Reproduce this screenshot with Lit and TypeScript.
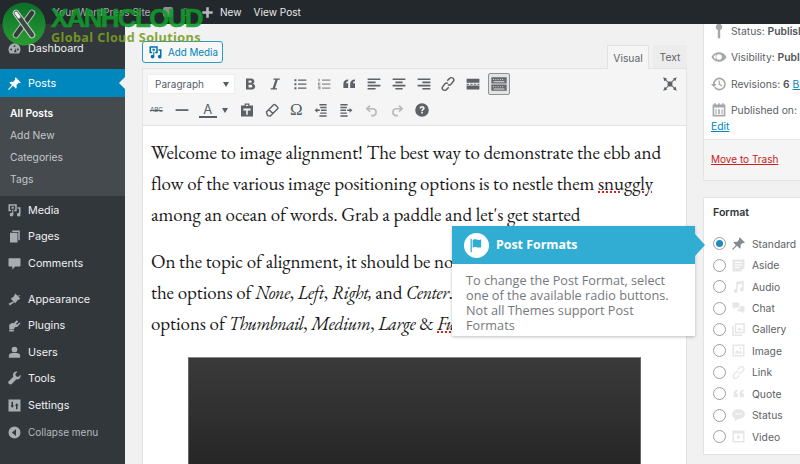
import { LitElement, html, css, svg } from "lit";
import { customElement } from "lit/decorators.js";

const I: Record<string, any> = {
  media: svg`<path fill-rule="evenodd" d="M2 1.500h11V11h-3.500V9H11V3.500H4V9h1.500v2H2zM6 5h3v2.500H6z"/><circle cx="6" cy="15.500" r="2.400"/><path d="M7 9h1.400v6.500H7z"/><path d="M14 5.500h4v10a2.400 2.400 0 1 1-2-2.300V7.500h-2z"/>`,
  gauge: svg`<path fill-rule="evenodd" d="M10 3a8 8 0 0 0-8 8c0 2 .8 4 2 5.500h12c1.200-1.500 2-3.500 2-5.500a8 8 0 0 0-8-8zM5.500 10a1.300 1.300 0 1 1 0 2.600 1.300 1.300 0 0 1 0-2.600zM10 5.500a1.300 1.300 0 1 1 0 2.600 1.300 1.300 0 0 1 0-2.600zM14.500 10a1.300 1.300 0 1 1 0 2.600 1.300 1.300 0 0 1 0-2.600zM9 15l3-5.500.5 5.500z"/>`,
  pin: svg`<path d="M11.500 1.500l7 7-1.500 1-1-.5-3.500 3c.8 2 .5 3.500-.5 5L8 13l-5.500 5.500-1-.7L6.500 12 3 8.500c1.500-1 3-1.300 5-.5l3-3.500-.5-1z"/>`,
  pages: svg`<path d="M7 2h10v13h-2V4H7z"/><path d="M4 5h10v13H4z"/>`,
  comment: svg`<path d="M3 3h14a1 1 0 0 1 1 1v9a1 1 0 0 1-1 1h-6l-4 4v-4H3a1 1 0 0 1-1-1V4a1 1 0 0 1 1-1z"/>`,
  brush: svg`<path d="M19 4l-5 1-3-3-2 4-4 3 6 6 3-4 4-2-3-3zM8 12.500l-6 3 2 2.500 5.500-4.500z"/>`,
  plug: svg`<path d="M13 3l2 1.500-3 3 1.500 1.500 3-3L18 7l-3.500 4c-1 1-2.500 1.300-3.500 1L9 15H3V9l3-2c.5-.3 2-.3 3 0z"/><path d="M3 15.500h6V18H3z"/>`,
  user: svg`<circle cx="10" cy="6" r="3.800"/><path d="M2.500 17v-3c0-2 2-3.500 4.500-3.500h6c2.500 0 4.500 1.500 4.500 3.500v3z"/>`,
  wrench: svg`<path d="M18 5l-3 3-3-1-1-3 3-3c-3-1-6 1-6 4.500 0 .8.200 1.500.4 2L2 14c-1.500 2 2 5 4 3.500l6.500-6.500c3.500 1 6.500-2 5.500-6z"/>`,
  settings: svg`<path fill-rule="evenodd" d="M2 2h16v16H2zM6 5v5H4.500L7 13l2.500-3H8V5zm6 10v-5h-1.500L13 7l2.500 3H14v5z"/>`,
  collapse: svg`<path fill-rule="evenodd" d="M10 2a8 8 0 1 1 0 16 8 8 0 0 1 0-16zm2 3.500L6.500 10l5.500 4.500z"/>`,
  plus: svg`<path d="M8 2h4v6h6v4h-6v6H8v-6H2V8h6z"/>`,
};
const ic = (n: string, cls = "ic") => html`<svg class=${cls} viewBox="0 0 20 20">${I[n]}</svg>`;

const nav = [
  ["media", "Media"], ["pages", "Pages"], ["comment", "Comments"],
];
const nav2 = [
  ["brush", "Appearance"], ["plug", "Plugins"], ["user", "Users"], ["wrench", "Tools"], ["settings", "Settings"],
];

const t: Record<string, any> = {
  b: svg`<path fill-rule="evenodd" d="M5 3h6.500c4.500 0 5.200 5.500 2 6.600 4.300.8 3.800 7.400-1 7.400H5zm3.200 2.500v3h2.500c2 0 2-3 0-3zm0 5.500v3.500h3c2.300 0 2.300-3.500 0-3.500z"/>`,
  i: svg`<path d="M8 3h8v1.800h-2.500L10 15.200h2.500V17h-8v-1.800H7L10.500 4.800H8z"/>`,
  ul: svg`<path d="M3 4h2.500v2.500H3zm0 5h2.500v2.500H3zm0 5h2.500v2.500H3zM7.500 4.500H18V6H7.500zm0 5H18V11H7.500zm0 5H18V16H7.500z"/>`,
  ol: svg`<path opacity=".7" d="M3 3.500h1.500v3.500H3zm-.5 5h3v1.200H4V11h1.500v1H2.500zm0 4.500h3v3.500h-3V15.500h1.800v-.8H2.500zM7.500 4.500H18V6H7.500zm0 5H18V11H7.500zm0 5H18V16H7.500z"/>`,
  q: svg`<path d="M9 4.500v2c-2 .3-2.500 1.500-2.500 2.500H9v6H3v-5c0-3.500 2-5.500 6-5.500zm8.500 0v2c-2 .3-2.500 1.500-2.500 2.500h2.500v6h-6v-5c0-3.500 2-5.500 6-5.500z"/>`,
  al: svg`<path d="M2 3h16v2H2zm0 4h10v2H2zm0 4h16v2H2zm0 4h10v2H2z"/>`,
  ac: svg`<path d="M2 3h16v2H2zm3.500 4h9v2h-9zM2 11h16v2H2zm3.500 4h9v2h-9z"/>`,
  ar: svg`<path d="M2 3h16v2H2zm6 4h10v2H8zM2 11h16v2H2zm6 4h10v2H8z"/>`,
  link: svg`<path fill="none" stroke="currentColor" stroke-width="1.800" d="M9 6l3-3c1.500-1.300 3.500-1.300 4.500 0s1 3 0 4l-3 3.500c-1 1-2.500 1-3.500 0M11 14l-3 3c-1.500 1.300-3.500 1.300-4.500 0s-1-3 0-4l3-3.500c1-1 2.500-1 3.500 0"/>`,
  more: svg`<path d="M2 3.500h16v5H2zM2 9.800h3v1H2zm4.500 0h3v1h-3zm4.500 0h3v1h-3zm4.500 0H18v1h-2.500zM2 12h16v5H2z"/>`,
  full: svg`<path d="M7 7h6v6H7zM1.500 1.500l5 2-1.300 1.200 2.300 2.300-.8.800-2.300-2.300L3 6.500zM18.500 1.500l-2 5-1.200-1.300-2.300 2.300-.8-.8 2.300-2.300L13.500 3.500zM1.500 18.500l2-5 1.200 1.300 2.300-2.300.8.800-2.300 2.300 1.300 1.200zM18.500 18.500l-5-2 1.300-1.200-2.300-2.300.8-.8 2.300 2.300 1.200-1.300z"/>`,
  hr: svg`<path d="M2 9h16v2.200H2z"/>`,
  paste: svg`<path fill-rule="evenodd" d="M7 2h6v2.500h4.500V18h-15V4.500H7zm1.500 1.500V5h3V3.500zM5.500 8v2.500H9V16h2v-5.500h3.500V8z"/>`,
  eraser: svg`<path fill="none" stroke="currentColor" stroke-width="1.800" d="M3 12.500L12 3.500c.6-.6 1.500-.6 2 0l3 3c.6.500.6 1.400 0 2L8 17.500l-3.500-.5zM6 9.500l5 5"/>`,
  indl: svg`<path d="M8 2.500h9v1.800H8zM9 6h8v1.800H9zM10 9.500h7v1.800h-7zM9 13h8v1.800H9zM8 16.500h9v1.800H8zM2 10.400l3.500-3v2H8.500v2H5.500v2z"/>`,
  indr: svg`<path d="M3 2.500h9v1.800H3zM3 6h8v1.800H3zM3 9.500h7v1.800H3zM3 13h8v1.800H3zM3 16.500h9v1.800H3zM18 10.400l-3.500-3v2H11.500v2h3v2z"/>`,
  undo: svg`<path fill="none" stroke="currentColor" stroke-width="2" d="M7.500 4.500L3.500 8.500l4 3.500M4 8.500h7.500a4.300 4.300 0 0 1 0 8.500H9"/>`,
  redo: svg`<path fill="none" stroke="currentColor" stroke-width="2" d="M12.500 4.500l4 4-4 3.500M16 8.500H8.500a4.300 4.300 0 0 0 0 8.500H11"/>`,
  help: svg`<path fill-rule="evenodd" d="M10 1.500a8.500 8.500 0 1 1 0 17 8.500 8.500 0 0 1 0-17zM7 8h2c0-1.500 2-1.500 2 0 0 1-2 1.500-2 3.500h2c0-1.500 2.300-2 2.300-3.800 0-3.200-6.300-3.700-6.300.3zm2 4.500v2h2v-2z"/>`,
  kb: svg`<path fill-rule="evenodd" d="M1.500 2.500h17v7h-17zm2 2v1h1v-1zm2.500 0v1h1v-1zm2.500 0v1h1v-1zm2.500 0v1h1v-1zm2.500 0v1h1v-1zM4 7v1h12V7zM1.500 10.500h17v7h-17zm2 2v1h1v-1zm2.500 0v1h1v-1zm2.500 0v1h1v-1zm2.500 0v1h1v-1zm2.500 0v1h1v-1zM4 15v1h12v-1z"/>`,
};
const tb = (n: string, cls = "tb") => html`<svg class=${cls} viewBox="0 0 20 20">${t[n]}</svg>`;

const fm: Record<string, any> = {
  Standard: svg`<path d="M11.500 1.500l7 7-1.500 1-1-.5-3.500 3c.8 2 .5 3.500-.5 5L8 13l-5.500 5.500-1-.7L6.500 12 3 8.500c1.500-1 3-1.300 5-.5l3-3.500-.5-1z"/>`,
  Aside: svg`<path fill-rule="evenodd" d="M2 2h16v11l-5 5H2zm3 3v1.500h10V5zm0 3.500V10h10V8.500zM5 12v1.500h6V12z"/>`,
  Audio: svg`<path d="M7 4l10-2v11.500a2.700 2.700 0 1 1-2-2.500V6L9 7.300V16a2.700 2.700 0 1 1-2-2.500z"/>`,
  Chat: svg`<path d="M2 2h9v7H6l-2 2V9H2zM9 10.500h3V7h6v7h-1.500v3L13 14H9z"/>`,
  Gallery: svg`<path fill-rule="evenodd" d="M5 1.500h13.500V15H5zm2 2V13h9.500V3.500zM8 11l3-4 2 2.500 1-1 2 2.500zM1.500 5H3.500v11.500H15v2H1.500z"/>`,
  Image: svg`<path fill-rule="evenodd" d="M2 2h16v16H2zm2 2v12h12V4zm1 10l3-5 2.500 3 2-2 2.500 4zM12.500 5.500a1.500 1.500 0 1 1 0 3 1.500 1.500 0 0 1 0-3z"/>`,
  Link: svg`<path fill="none" stroke="currentColor" stroke-width="1.800" d="M9 6l3-3c1.500-1.300 3.500-1.300 4.500 0s1 3 0 4l-3 3.500c-1 1-2.500 1-3.500 0M11 14l-3 3c-1.500 1.300-3.500 1.300-4.500 0s-1-3 0-4l3-3.500c1-1 2.500-1 3.500 0"/>`,
  Quote: svg`<path d="M9 5v2c-2 .3-2.500 1.500-2.500 2.500H9V15H3.500V10C3.500 7 5.500 5 9 5zm8 0v2c-2 .3-2.500 1.500-2.500 2.500H17V15h-5.500V10c0-3 2-5 5.500-5z"/>`,
  Status: svg`<path fill-rule="evenodd" d="M10 1.500c4.500 0 8.500 2.700 8.500 6.500s-4 6.500-8.500 6.500h-1L5 18v-4C3 13 1.500 10.500 1.500 8c0-3.800 4-6.500 8.500-6.500zM6 7v2h2V7zm3 0v2h2V7zm3 0v2h2V7z"/>`,
  Video: svg`<path fill-rule="evenodd" d="M2 2h16v16H2zm2 4v10h12V6zM8 8l5 3-5 3z"/>`,
};

@customElement("app-root")
export class AppRoot extends LitElement {
  static styles = css`
    :host { display: block; width: 800px; height: 464px; overflow: hidden; position: relative; background: #f1f1f1; font-family: Inter, "Liberation Sans", sans-serif; }
    .bar { height: 24px; background: #23282d; color: #e8eaeb; display: flex; align-items: center; font-size: 10.100px; padding-left: 53px; }
    .bar .site { width: 110px; flex: none; color: #aeb2b5; white-space: nowrap; }
    .bar .bub { width: 10px; height: 10px; background: #8c9094; border-radius: 2px; flex: none; }
    .bar .zero { width: 28px; flex: none; padding-left: 9px; box-sizing: border-box; color: #6a6f74; }
    .bar .plus { width: 13px; height: 13px; fill: #b4b9be; margin: 0 6px 0 0; flex: none; }
    .bar .new { margin-right: 12px; }
    .main { display: flex; height: 440px; }

    .side { width: 125px; flex: none; background: #32373c; color: #eef0f1; font-size: 10.800px; padding-top: 11px; box-sizing: border-box; }
    .ic { width: 15px; height: 15px; fill: #a8adb2; flex: none; }
    .it { height: 26.600px; display: flex; align-items: center; gap: 6px; padding-left: 7px; white-space: nowrap; }
    .it.dash { height: 26px; }
    .it.cur { background: #0087be; color: #fff; height: 28px; margin-top: 8px; position: relative; }
    .it.cur .ic { fill: #fff; }
    .it.cur::after { content: ""; position: absolute; right: 0; top: 8px; border: 6px solid transparent; border-right-color: #f1f1f1; border-left: 0; }
    .sub { background: #454a4f; padding: 5px 0 6px 10px; margin-bottom: 1px; color: #c4c7ca; font-size: 10.300px; }
    .sub div { height: 22px; display: flex; align-items: center; }
    .sub .on { color: #fff; font-weight: 600; }
    .sep { height: 9px; }
    .coll { color: #b4b9be; font-size: 10px; }

    .content { width: 562px; flex: none; padding: 17px 0 0 17px; box-sizing: border-box; }
    .head { display: flex; justify-content: space-between; height: 27px; }
    .add { width: 81px; height: 22px; box-sizing: border-box; border: 1px solid #2a9cc4; border-radius: 3px; background: #f7f7f7; color: #0085ba; font-size: 9.800px; display: flex; align-items: center; gap: 5px; padding-left: 5px; white-space: nowrap; }
    .add svg { width: 15px; height: 15px; fill: #0073aa; flex: none; }
    .tabs { display: flex; align-self: flex-end; gap: 4px; position: relative; margin-bottom: -1px; }
    .tab { height: 23px; width: 34px; font-size: 10.300px; color: #5f6468; display: flex; align-items: center; justify-content: center; background: #ececec; box-sizing: border-box; }
    .tab.on { width: 42px; height: 24px; background: #f5f5f5; border: 1px solid #e2e2e2; border-bottom: 0; }
    .editor { border: 1px solid #e2e2e2; background: #fff; height: 420px; }
    .tools { background: #f5f5f5; border-bottom: 1px solid #e2e2e2; padding: 2px 8px 0 4px; box-sizing: border-box; height: 57px; }
    .row { height: 26px; display: flex; align-items: center; color: #555d66; }
    .row svg { flex: none; }
    .tb { width: 16px; height: 16px; fill: #5c6268; color: #5c6268; margin-right: 8.800px; }
    .tb.last { margin-right: 0; }
    .tb.dim { opacity: .4; }
    .tb.wide { margin-right: 9.300px; }
    .sel { width: 88px; height: 20px; background: #fff; border: 1px solid #eeeeee; box-sizing: border-box; font-size: 10px; color: #555d66; display: flex; align-items: center; justify-content: space-between; padding: 0 5px 0 7px; margin-right: 7px; flex: none; }
    .car { width: 0; height: 0; border: 3.500px solid transparent; border-top: 5px solid #555d66; border-bottom: 0; flex: none; }
    .car.col-car { margin: 0 10.500px 0 5.500px; }
    .kb { width: 22px; height: 22px; border: 1px solid #8d9296; border-radius: 2px; background: #e3e3e3; display: flex; align-items: center; justify-content: center; box-sizing: border-box; margin-left: -2px; flex: none; }
    .kb svg { width: 18px; height: 18px; fill: #65696d; }
    .spacer { flex: 1; }
    .abc { font-size: 6.500px; letter-spacing: -.3px; width: 13px; margin: 0 11px 0 3px; text-decoration: line-through; white-space: nowrap; flex: none; }
    .col { font-size: 13px; width: 18px; border-bottom: 2px solid #555d66; text-align: center; line-height: 13px; flex: none; }
    .om { font-size: 17px; width: 16px; margin-right: 8.800px; text-align: center; font-family: "Liberation Serif", serif; flex: none; }
    .body { padding: 0 0 0 8px; font-family: "EB Garamond", "Liberation Serif", serif; font-size: 19px; line-height: 30.900px; color: #1a1a1a; letter-spacing: -.08px; }
    .body p { margin: 0 0 16px; white-space: nowrap; }
    .body p.first { padding-top: 12px; }
    .body i { font-size: 18px; letter-spacing: -.45px; }
    .body .w { text-decoration: underline dotted #e02020; text-underline-offset: 2px; }
    .pic { width: 453px; height: 130px; margin: 18px 0 0 37px; box-sizing: border-box; background: linear-gradient(#3a3a3a, #222); border: 1px solid #666; border-top-color: #8a8a8a; border-bottom: 0; }

    .right { flex: 1; padding: 0 0 0 16px; min-width: 0; font-size: 10.300px; color: #5b6065; }
    .box { background: #fff; border: 1px solid #e3e3e3; border-top: 0; border-right: 0; box-sizing: border-box; }
    .pub { height: 157px; overflow: hidden; }
    .line { height: 26.500px; display: flex; align-items: center; gap: 4px; padding-left: 7px; white-space: nowrap; }
    .line.top { height: 14px; margin-bottom: 6px; }
    .line svg { width: 16px; height: 16px; fill: #a4a8ac; color: #a4a8ac; flex: none; }
    .line b { color: #50555a; font-weight: 600; }
    .line a, .edit { color: #0085ba; text-decoration: underline; }
    .edit { padding-left: 7px; margin-top: -4px; height: 14px; display: block; line-height: 13px; }
    .trash { border-top: 1px solid #e8e8e8; background: #f5f5f5; margin-top: 5px; height: 42px; padding: 13px 0 0 7px; box-sizing: border-box; color: #cf2020; text-decoration: underline; font-size: 10px; }
    .fmt { margin-top: 16px; height: 258px; border-top: 1px solid #e3e3e3; }
    .fmt h3 { margin: 0; height: 28px; font-size: 10.600px; font-weight: 600; color: #30353a; padding-left: 9px; display: flex; align-items: center; }
    .opts { padding-top: 7px; }
    .opt { height: 21.450px; display: flex; align-items: center; padding-left: 9px; color: #5d6266; white-space: nowrap; }
    .rad { width: 13px; height: 13px; border-radius: 50%; border: 1px solid #9a9fa3; background: #fff; box-sizing: border-box; margin-right: 5px; flex: none; display: flex; align-items: center; justify-content: center; }
    .rad.on::after { content: ""; width: 7px; height: 7px; border-radius: 50%; background: #1e8cbe; }
    .opt svg { width: 15px; height: 15px; fill: #e6e6e6; color: #e6e6e6; margin-right: 6px; flex: none; }
    .opt.s svg { fill: #85898d; }

    .tip { position: absolute; left: 452px; top: 226px; width: 243px; height: 110px; background: #fff; box-shadow: 0 1px 3px rgba(0,0,0,.25); font-family: "Open Sans", sans-serif; color: #75797d; font-size: 12.700px; line-height: 15.100px; }
    .tip .hd { height: 38px; background: #31add4; color: #fff; font-weight: 700; font-size: 12.400px; display: flex; align-items: center; gap: 7px; padding-left: 12px; position: relative; }
    .tip .hd::after { content: ""; position: absolute; right: -10px; top: 8px; border-left: 10px solid #31add4; border-top: 11px solid transparent; border-bottom: 11px solid transparent; }
    .flag { width: 25px; height: 25px; border-radius: 50%; background: #fff; display: flex; align-items: center; justify-content: center; }
    .flag svg { width: 17px; height: 17px; fill: #31add4; }
    .tip p { margin: 0; padding: 9px 0 0 14px; white-space: nowrap; }

    .logo { position: absolute; left: 2px; top: 2px; width: 44px; height: 44px; }
    .wm { position: absolute; left: 51px; top: 3px; color: #129a2b; font-family: "Liberation Sans", sans-serif; font-weight: 700; font-size: 26px; line-height: 30px; letter-spacing: -1.700px; white-space: nowrap; opacity: .9; -webkit-text-stroke: .6px #129a2b; }
    .wm2 { position: absolute; left: 51px; top: 29px; color: #7a9e24; font-family: "Open Sans", sans-serif; font-weight: 700; font-size: 12.700px; line-height: 17px; letter-spacing: .35px; white-space: nowrap; opacity: .9; }
  `;

  render() {
    return html`
      <div class="bar"><span class="site">Your WordPress Site</span><span class="bub"></span><span class="zero">0</span>${ic("plus", "plus")}<span class="new">New</span><span>View Post</span></div>
      <div class="main">
        <div class="side">
          <div class="it dash">${ic("gauge")}Dashboard</div>
          <div class="it cur">${ic("pin")}Posts</div>
          <div class="sub">
            <div class="on">All Posts</div><div>Add New</div><div>Categories</div><div>Tags</div>
          </div>
          ${nav.map(([a, b]) => html`<div class="it">${ic(a)}${b}</div>`)}
          <div class="sep"></div>
          ${nav2.map(([a, b]) => html`<div class="it">${ic(a)}${b}</div>`)}
          <div class="it coll">${ic("collapse")}Collapse menu</div>
        </div>
        <div class="content">
          <div class="head">
            <div class="add"><svg viewBox="0 0 20 20">${I.media}</svg>Add Media</div>
            <div class="tabs"><div class="tab on">Visual</div><div class="tab">Text</div></div>
          </div>
          <div class="editor">
            <div class="tools">
              <div class="row">
                <div class="sel">Paragraph<span class="car"></span></div>
                ${["b", "i", "ul", "ol", "q", "al", "ac", "ar", "link", "more"].map((n) => tb(n))}
                <div class="kb">${tb("kb", "")}</div>
                <span class="spacer"></span>
                ${tb("full", "tb last")}
              </div>
              <div class="row">
                <span class="abc">ABC</span>
                ${tb("hr")}
                <span class="col">A</span><span class="car col-car"></span>
                ${["paste", "eraser"].map((n) => tb(n))}
                <span class="om">Ω</span>
                ${["indl", "indr"].map((n) => tb(n, "tb wide"))}
                ${tb("undo", "tb dim wide")}
                ${tb("redo", "tb dim wide")}
                ${tb("help")}
              </div>
            </div>
            <div class="body">
              <p class="first">Welcome to image alignment! The best way to demonstrate the ebb and<br>flow of the various image positioning options is to nestle them <span class="w">snuggly</span><br>among an ocean of words. Grab a paddle and let's get started</p>
              <p>On the topic of alignment, it should be noted that users can choose from<br>the options of <i>None</i>, <i>Left</i>, <i>Right,</i> and <i>Center</i>. In addition, they also get the<br>options of <i>Thumbnail</i>, <i>Medium</i>, <i>Large</i> &amp; <i class="w">Fullsize</i>.</p>
              <div class="pic"></div>
            </div>
          </div>
        </div>
        <div class="right">
          <div class="box pub">
            <div class="line top"><svg viewBox="0 0 20 20"><path d="M10 1a4 4 0 0 1 1.500 7.700V19h-3V8.700A4 4 0 0 1 10 1z"/></svg><span>Status: <b>Published</b></span></div>
            <div class="line"><svg viewBox="0 0 20 20"><path fill-rule="evenodd" d="M10 4c4 0 7.500 2.500 9.500 6-2 3.500-5.500 6-9.500 6S2.500 13.500.5 10C2.500 6.500 6 4 10 4zm0 2.500a3.500 3.500 0 1 0 0 7 3.500 3.500 0 0 0 0-7zm-7 3.500c1 1.500 2 2.500 3.500 3.500C5.500 12 5.500 8 6.500 6.500 5 7.500 4 8.500 3 10z"/></svg><span>Visibility: <b>Public</b></span></div>
            <div class="line"><svg viewBox="0 0 20 20"><path fill-rule="evenodd" d="M10.500 2a8 8 0 1 1-6.500 12.700l1.600-1.200A6 6 0 1 0 4.500 10H7l-3.500 4L0 10h2.500a8 8 0 0 1 8-8zM9.500 5.500H11v4.200l3 2.300-1 1.200-3.500-2.700z"/></svg><span>Revisions: <b>6</b> <a>Browse</a></span></div>
            <div class="line"><svg viewBox="0 0 20 20"><path fill-rule="evenodd" d="M2 3h2V1.500h2V3h3V1.500h2V3h3V1.500h2V3h2v15H2zm2 4v9h12V7zm1.500 2H7v6H5.500zm3.500 0h2v6H9zm4 0h1.500v6H13z"/></svg><span>Published on: Jan</span></div>
            <a class="edit">Edit</a>
            <div class="trash">Move to Trash</div>
          </div>
          <div class="box fmt">
            <h3>Format</h3>
            <div class="opts">
              ${Object.keys(fm).map((k, i) => html`<div class="opt ${i === 0 ? "s" : ""}"><span class="rad ${i === 0 ? "on" : ""}"></span><svg viewBox="0 0 20 20">${fm[k]}</svg>${k}</div>`)}
            </div>
          </div>
        </div>
      </div>

      <div class="tip">
        <div class="hd"><span class="flag"><svg viewBox="0 0 20 20"><path d="M3 2h1.500v16H3zM5.500 3.500c3-2 5.500 1 10 -.5v9c-4.500 1.500-7-1.500-10 .5z"/></svg></span>Post Formats</div>
        <p>To change the Post Format, select<br>one of the available radio buttons.<br>Not all Themes support Post<br>Formats</p>
      </div>

      <svg class="logo" viewBox="0 0 44 44">
        <defs><linearGradient id="g" x1="0" y1="0" x2="0" y2="1"><stop offset="0" stop-color="#0a6e2a"/><stop offset="1" stop-color="#2a9c30"/></linearGradient></defs>
        <circle cx="22" cy="22" r="21.500" fill="url(#g)"/>
        <line x1="30" y1="11" x2="14" y2="33" stroke="#a8b8a8" stroke-width="6.500" stroke-linecap="round"/>
        <line x1="30" y1="11" x2="14" y2="33" stroke="#303c36" stroke-width="4.500" stroke-linecap="round"/>
        <line x1="14" y1="11" x2="30" y2="33" stroke="#c4d0c4" stroke-width="6.500" stroke-linecap="round"/>
        <line x1="14" y1="11" x2="30" y2="33" stroke="#3c4a42" stroke-width="4.500" stroke-linecap="round"/>
        <line x1="14" y1="11" x2="17" y2="15" stroke="#e8f0e8" stroke-width="3" stroke-linecap="round"/>
      </svg>
      <div class="wm">XANHCLOUD</div>
      <div class="wm2">Global Cloud Solutions</div>
    `;
  }
}
